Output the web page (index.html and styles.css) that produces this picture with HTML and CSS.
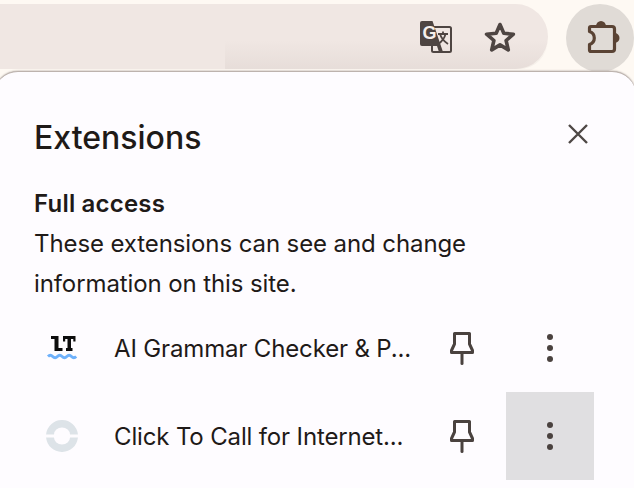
FILE: index.html
```html
<!DOCTYPE html>
<html>
<head>
	<title>Extensions</title>
	<link rel="stylesheet" href="styles.css">
</head>
<body>
<div class="toolbar">
  <div class="omnibox">
    <svg class="translate-icon" width="32" height="32" viewBox="0 0 32 32">
      <rect x="12" y="6" width="19" height="25" rx="1.500" fill="none" stroke="#4e4542" stroke-width="2"/>
      <path d="M2 0h10.500l10.500 31h-4l-2-6H2a2 2 0 0 1-2-2V2a2 2 0 0 1 2-2z" fill="#4e4542"/>
      <path d="M18 13h10M23 10.500V13M25.500 13c-1 4.500-4 8-8 10.500M20 13c1 3.500 3.500 7 8 10" fill="none" stroke="#4e4542" stroke-width="1.800"/>
      <text class="translate-g" x="2.500" y="18">G</text>
    </svg>
    <svg class="star-icon" width="34" height="34" viewBox="0 0 34 34">
      <path d="M17 4.500l3.800 8.800 9.600.9-7.300 6.300 2.200 9.400-8.300-5-8.300 5 2.200-9.400-7.300-6.300 9.600-.9z" fill="none" stroke="#4e4542" stroke-width="3.600" stroke-linejoin="round"/>
    </svg>
  </div>
  <div class="puzzle-btn">
    <svg class="puzzle-icon" width="36" height="36" viewBox="0 0 36 36">
      <path d="M8 6.500H29a2.500 2.500 0 0 1 2.500 2.500v20a2.500 2.500 0 0 1-2.500 2.500H8a1.500 1.500 0 0 1-1.500-1.500V24.500c3-1 4.800-3.500 4.800-6.500s-1.800-5.500-4.800-6.500V8A1.500 1.500 0 0 1 8 6.500z" fill="none" stroke="#5a4334" stroke-width="3.200" stroke-linejoin="round"/>
      <path d="M13 6.500a5 5.500 0 0 1 10 0zM31.500 13a5 5 0 0 1 0 10z" fill="#5a4334"/>
    </svg>
  </div>
</div>

<div class="panel">
  <div class="panel-head">
    <h1 class="panel-title">Extensions</h1>
    <svg class="close-icon" width="22" height="22" viewBox="0 0 22 22">
      <path d="M2 2l18 18M20 2L2 20" stroke="#4e4845" stroke-width="2.400" fill="none"/>
    </svg>
  </div>

  <div class="access">
    <div class="access-title">Full access</div>
    <p class="access-text">These extensions can see and change information on this site.</p>
  </div>

  <div class="ext-row">
    <div class="ext-icon">
      <svg width="32" height="26" viewBox="0 0 32 26">
        <path d="M5 1h7.500v12h4V16H8.500V4H5z" fill="#0d0d0d"/>
        <path d="M17 1h12.500v5.500h-2.200V4H25v9h1.500v3H20v-3h1.500V4h-2.300v2.500H17z" fill="#0d0d0d"/>
        <path d="M2 21.500q2.300-2.500 4.700 0t4.700 0 4.700 0 4.700 0 4.700 0 4.700 0" fill="none" stroke="#6eb1fb" stroke-width="2.800"/>
      </svg>
    </div>
    <div class="ext-name">AI Grammar Checker &amp; P...</div>
    <svg class="pin-icon" width="24" height="34" viewBox="0 0 24 34">
      <path d="M4.500 2.500H19.500V13L22.500 19.500V21.500H1.500V19.500L4.500 13z" fill="none" stroke="#4a423f" stroke-width="3" stroke-linejoin="round"/>
      <path d="M12 22v10.500" stroke="#4a423f" stroke-width="3" stroke-linecap="round"/>
    </svg>
    <div class="more-btn"><i></i><i></i><i></i></div>
  </div>

  <div class="ext-row">
    <div class="ext-icon">
      <svg width="32" height="32" viewBox="0 0 32 32">
        <path d="M.07 14.500A16 16 0 0 1 31.930 14.500H24A8 7 0 0 0 8 14.500zM.07 17.500H8A8 7 0 0 0 24 17.500H31.930A16 16 0 0 1 .07 17.500z" fill="#dde3e8"/>
      </svg>
    </div>
    <div class="ext-name">Click To Call for Internet...</div>
    <svg class="pin-icon" width="24" height="34" viewBox="0 0 24 34">
      <path d="M4.500 2.500H19.500V13L22.500 19.500V21.500H1.500V19.500L4.500 13z" fill="none" stroke="#4a423f" stroke-width="3" stroke-linejoin="round"/>
      <path d="M12 22v10.500" stroke="#4a423f" stroke-width="3" stroke-linecap="round"/>
    </svg>
    <div class="more-btn hovered"><i></i><i></i><i></i></div>
  </div>
</div>
</body>
</html>
```

FILE: styles.css
```css
html, body {
  margin: 0;
  height: 488px;
  overflow: hidden;
}

body {
  background: #fef9f3;
  font-family: Inter, "Liberation Sans", sans-serif;
  color: #1f1a18;
}

.toolbar {
  display: flex;
  justify-content: space-between;
  height: 67px;
  padding-top: 4px;
}

.omnibox {
  position: relative;
  width: 548px;
  height: 65px;
  border-radius: 0 33px 33px 0;
  background: #f0e7e3;
  display: flex;
  align-items: center;
  justify-content: flex-end;
  gap: 31px;
  padding-right: 31px;
  box-sizing: border-box;
}

/* shadow the popup throws up onto the address bar */
.omnibox::before {
  content: "";
  position: absolute;
  left: 225px;
  right: 0;
  top: 36px;
  bottom: 0;
  border-radius: 0 0 33px 0;
  background: linear-gradient(rgba(150, 135, 130, 0), rgba(150, 135, 130, 0.1));
}

.translate-icon, .star-icon {
  position: relative;
}

.translate-g {
  font: bold 18px "Liberation Sans", sans-serif;
  fill: #f6f0ec;
}

.puzzle-btn {
  width: 68px;
  height: 68px;
  border-radius: 50%;
  background: #e0dbd6;
  display: flex;
  align-items: center;
  justify-content: center;
  position: relative;
  z-index: 2;
}

.puzzle-icon {
  overflow: visible;
  margin-left: 2px;
}

.panel {
  position: relative;
  z-index: 3;
  height: 417px;
  width: 642px;
  margin-left: -6px;
  padding: 0 2px 0 6px;
  background: #fefcff;
  border-top: 1px solid #bdb3ae;
  border-radius: 24px 24px 0 0;
  box-shadow: 0 0 2px #9b918c;
  box-sizing: border-box;
}

.panel-head {
  display: flex;
  align-items: center;
  justify-content: space-between;
  padding: 49px 45px 0 34px;
  height: 33px;
}

.panel-title {
  margin: 0;
  font-size: 32px;
  font-weight: 500;
  line-height: 33px;
}

.close-icon {
  margin-top: -7px;
}

.access {
  padding: 30px 34px 0;
}

.access-title {
  font-size: 24px;
  font-weight: 600;
  letter-spacing: 0.2px;
  line-height: 40px;
}

.access-text {
  margin: 0;
  width: 470px;
  font-size: 24px;
  letter-spacing: -0.1px;
  line-height: 40px;
}

.ext-row {
  display: flex;
  align-items: center;
  height: 88px;
}

.ext-icon {
  width: 114px;
  padding-left: 46px;
  box-sizing: border-box;
  display: flex;
}

.ext-name {
  width: 336px;
  font-size: 24px;
  letter-spacing: -0.15px;
  white-space: nowrap;
}

.pin-icon {
  flex: none;
}

.more-btn {
  width: 88px;
  height: 88px;
  margin-left: 32px;
  display: flex;
  flex-direction: column;
  align-items: center;
  justify-content: center;
  gap: 5px;
}

.more-btn i {
  width: 6px;
  height: 6px;
  border-radius: 50%;
  background: #4a423f;
}

.more-btn.hovered {
  background: #e0dfe1;
}
```
